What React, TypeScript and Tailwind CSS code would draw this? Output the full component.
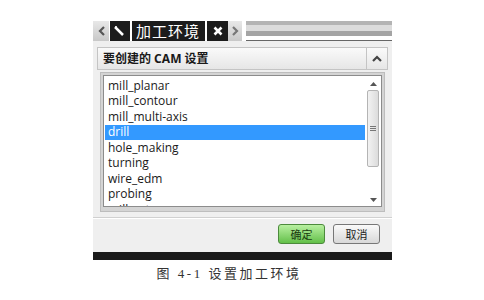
import React from "react";

const items = [
  "mill_planar",
  "mill_contour",
  "mill_multi-axis",
  "drill",
  "hole_making",
  "turning",
  "wire_edm",
  "probing",
  "mill_rotary",
];

export default function App() {
  return (
    <div className="w-[484px] h-[300px] bg-white overflow-hidden" style={{ fontFamily: '"Noto Sans", "Noto Sans CJK SC", sans-serif' }}>
      <div className="pt-[21px] pl-[93px]">
        <div className="w-[299px]">
          {/* tab bar */}
          <div className="flex h-[20px]">
            <div className="w-[16px] bg-gradient-to-b from-[#e8e8e8] to-[#c8c8c8] flex items-center justify-center text-[#555] text-[13px] font-bold leading-none">
              <svg width="7" height="10" viewBox="0 0 7 10"><path d="M6 1 L2 5 L6 9" stroke="#555" strokeWidth="2.2" fill="none" /></svg>
            </div>
            <div className="w-[20px] bg-[#1c1c1c] flex items-center justify-center ml-[1px]">
              <svg width="12" height="12" viewBox="0 0 12 12"><path d="M1 2 L9 10" stroke="#fff" strokeWidth="2.5" /><path d="M1 1 L3 1 L2 3 Z" fill="#fff" /></svg>
            </div>
            <div className="w-[73px] bg-[#1c1c1c] ml-[2px] flex items-center pl-[4px] text-white text-[15px] leading-none tracking-[1px]">加工环境</div>
            <div className="w-[21px] bg-[#1c1c1c] ml-[2px] flex items-center justify-center">
              <svg width="10" height="10" viewBox="0 0 10 10"><path d="M1.5 1.5 L8.5 8.5 M8.5 1.5 L1.5 8.5" stroke="#fff" strokeWidth="2.6" /></svg>
            </div>
            <div className="w-[14px] bg-gradient-to-b from-[#e8e8e8] to-[#c8c8c8] flex items-center justify-center">
              <svg width="7" height="10" viewBox="0 0 7 10"><path d="M1 1 L5 5 L1 9" stroke="#777" strokeWidth="2.2" fill="none" /></svg>
            </div>
            <div className="flex-1 ml-[4px] flex flex-col">
              <div className="h-[4px] bg-[#b4b4b4]" />
              <div className="h-[6px] bg-[#dcdcdc]" />
              <div className="h-[5px] bg-[#a4a4a4]" />
              <div className="h-[4px] bg-white" />
              <div className="h-[1px] bg-[#666]" />
            </div>
          </div>
          {/* body */}
          <div className="bg-[#efefef] pt-[6px] px-[4px] h-[211px] flex flex-col">
            <div className="h-[23px] flex border border-[#c4c4c4] bg-gradient-to-b from-[#fafafa] to-[#e6e6e6]">
              <div className="flex-1 flex items-center pl-[5px] text-[12px] font-bold text-[#1a1a1a] leading-none">要创建的 CAM 设置</div>
              <div className="w-[21px] border-l border-[#c4c4c4] flex items-center justify-center">
                <svg width="10" height="7" viewBox="0 0 10 7"><path d="M1 6 L5 2 L9 6" stroke="#444" strokeWidth="2.2" fill="none" /></svg>
              </div>
            </div>
            <div className="mt-[2px] mx-[3px] h-[140px] bg-[#d4d4d4] border border-[#bdbdbd] p-[2px] pt-[2px]">
              <div className="h-[132px] bg-white border border-[#8c8c8c] flex overflow-hidden">
                <div className="flex-1 pt-[2px] pl-[1px]" style={{ fontFamily: '"Open Sans", "Noto Sans", sans-serif' }}>
                  {items.map((it) => (
                    <div
                      key={it}
                      className={`h-[15.5px] flex items-center pl-[3px] text-[12px] leading-none ${it === "drill" ? "bg-[#3399ff] text-white" : "text-[#1a1a1a]"}`}
                    >
                      {it}
                    </div>
                  ))}
                </div>
                <div className="w-[16px] flex flex-col items-center pt-[6px] pb-[4px]">
                  <svg width="7" height="4" viewBox="0 0 7 4"><path d="M0 4 L3.5 0 L7 4 Z" fill="#555" /></svg>
                  <div className="mt-[4px] w-[12px] h-[77px] border border-[#b4b4b4] rounded-[2px] bg-gradient-to-r from-[#f2f2f2] to-[#dcdcdc] flex items-center justify-center">
                    <div className="flex flex-col gap-[1px]">
                      <div className="w-[6px] h-[1px] bg-[#777]" />
                      <div className="w-[6px] h-[1px] bg-[#777]" />
                      <div className="w-[6px] h-[1px] bg-[#777]" />
                    </div>
                  </div>
                  <div className="flex-1" />
                  <svg width="7" height="4" viewBox="0 0 7 4"><path d="M0 0 L3.5 4 L7 0 Z" fill="#555" /></svg>
                </div>
              </div>
            </div>
            <div className="mt-[5px] h-[1px] bg-[#d0d0d0] mx-[-4px]" />
            <div className="h-[1px] bg-white mx-[-4px]" />
            <div className="flex justify-end gap-[8px] pr-[8px] mt-[5px]">
              <div className="w-[47px] h-[20px] rounded-[3px] border border-[#4c8a3c] bg-gradient-to-b from-[#b8f0a0] to-[#62c048] flex items-center justify-center text-[11px] text-[#1a3a10] leading-none">确定</div>
              <div className="w-[47px] h-[20px] rounded-[3px] border border-[#777] bg-gradient-to-b from-[#fafafa] to-[#d8d8d8] flex items-center justify-center text-[11px] text-[#222] leading-none">取消</div>
            </div>
          </div>
          <div className="h-[8px] bg-[#1a1a1a]" />
        </div>
      </div>
      <div className="mt-[7px] w-[484px] flex justify-center pr-[26px]">
        <div className="text-[13px] text-[#333] leading-none tracking-[2.5px] whitespace-pre" style={{ fontFamily: '"Liberation Serif", "Noto Sans CJK SC", serif' }}>图 4-1 设置加工环境</div>
      </div>
    </div>
  );
}
